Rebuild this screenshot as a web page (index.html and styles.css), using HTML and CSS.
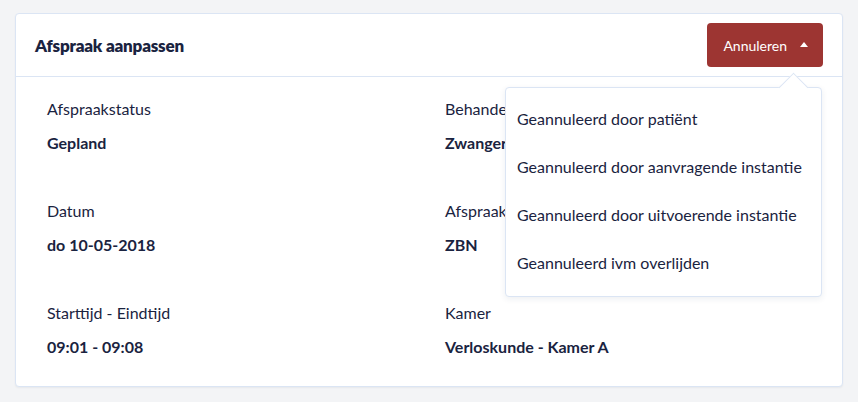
FILE: index.html
```html
<!DOCTYPE html>
<html lang="nl">
<head>
    <meta charset="UTF-8">
    <meta name="viewport" content="width=device-width, initial-scale=1.0">
    <title>Afspraak aanpassen</title>
    <link rel="stylesheet" href="styles.css">
</head>
<body>
    <div class="card">
        <div class="card-header">
            <h2>Afspraak aanpassen</h2>
            <div class="dropdown">
                <button class="btn-cancel">Annuleren <span class="caret"></span></button>
                <ul class="dropdown-menu">
                    <li>Geannuleerd door patiënt</li>
                    <li>Geannuleerd door aanvragende instantie</li>
                    <li>Geannuleerd door uitvoerende instantie</li>
                    <li>Geannuleerd ivm overlijden</li>
                </ul>
            </div>
        </div>
        <div class="card-body">
            <div class="field">
                <span class="label">Afspraakstatus</span>
                <span class="value">Gepland</span>
            </div>
            <div class="field">
                <span class="label">Behandeling</span>
                <span class="value">Zwangerschapscontrole</span>
            </div>
            <div class="field">
                <span class="label">Datum</span>
                <span class="value">do 10-05-2018</span>
            </div>
            <div class="field">
                <span class="label">Afspraaklocatie</span>
                <span class="value">ZBN</span>
            </div>
            <div class="field">
                <span class="label">Starttijd - Eindtijd</span>
                <span class="value">09:01 - 09:08</span>
            </div>
            <div class="field">
                <span class="label">Kamer</span>
                <span class="value">Verloskunde - Kamer A</span>
            </div>
        </div>
    </div>
</body>
</html>
```

FILE: styles.css
```css
:root {
    --text-color: #1a2340;
    --border-color: #dbe5f4;
    --danger-color: #9d3532;
    --background-color: #f3f4f6;
}

* {
    margin: 0;
    padding: 0;
    box-sizing: border-box;
}

body {
    font-family: Lato, "Open Sans", sans-serif;
    color: var(--text-color);
    background-color: var(--background-color);
    padding: 13px 15px;
}

.card {
    background: white;
    border: 1px solid var(--border-color);
    border-radius: 4px;
    box-shadow: 0 1px 2px rgba(30, 50, 90, 0.06);
}

.card-header {
    display: flex;
    justify-content: space-between;
    align-items: center;
    padding: 9px 19px 9px 19px;
    border-bottom: 1px solid var(--border-color);
}

.card-header h2 {
    font-size: 17px;
    font-weight: 800;
    letter-spacing: -0.2px;
}

.dropdown {
    position: relative;
}

.btn-cancel {
    display: flex;
    align-items: center;
    gap: 13px;
    height: 44px;
    padding: 0 15px 0 16px;
    background-color: var(--danger-color);
    color: white;
    border: none;
    border-radius: 4px;
    font-family: inherit;
    font-size: 14px;
    cursor: pointer;
}

.caret {
    width: 0;
    height: 0;
    border-left: 4.5px solid transparent;
    border-right: 4.5px solid transparent;
    border-bottom: 5px solid white;
    margin-top: -1px;
}

.dropdown-menu {
    position: absolute;
    top: 64px;
    right: 1px;
    width: 317px;
    list-style: none;
    padding: 7px 0 9px;
    background: white;
    border: 1px solid var(--border-color);
    border-radius: 4px;
    box-shadow: 0 2px 6px rgba(30, 50, 90, 0.08);
    z-index: 10;
}

/* little pointer above the menu, under the caret */
.dropdown-menu::before {
    content: "";
    position: absolute;
    top: -11px;
    right: 17px;
    width: 20px;
    height: 20px;
    background: white;
    border-top: 1px solid var(--border-color);
    border-left: 1px solid var(--border-color);
    transform: rotate(45deg);
}

.dropdown-menu li {
    position: relative;
    height: 48px;
    line-height: 48px;
    padding-left: 11px;
    font-size: 16px;
    white-space: nowrap;
}

.card-body {
    display: grid;
    grid-template-columns: 398px 1fr;
    row-gap: 46px;
    padding: 21px 31px 28px;
}

.field {
    display: flex;
    flex-direction: column;
    gap: 12px;
}

.label {
    font-size: 16px;
    line-height: 22px;
}

.value {
    font-size: 16px;
    line-height: 22px;
    font-weight: 700;
}
```
